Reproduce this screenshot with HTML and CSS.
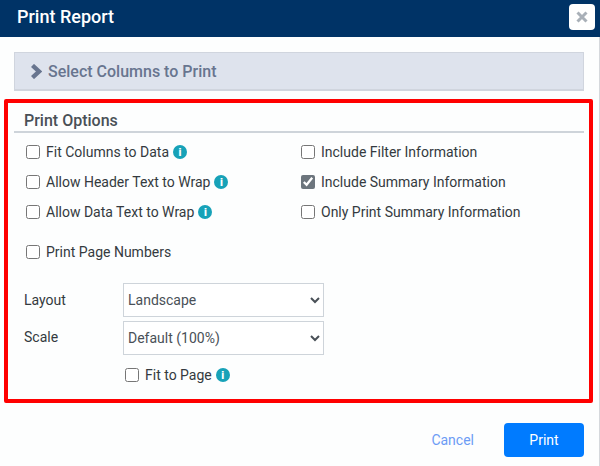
FILE: index.html
```html
<!DOCTYPE html>
<html lang="en">
<head>
    <meta charset="UTF-8">
    <title>Print Report</title>
    <link rel="stylesheet" href="styles.css">
</head>
<body>
    <div class="modal">
        <div class="modal-header">
            <h1>Print Report</h1>
            <button class="close-btn" aria-label="Close">
                <svg width="12" height="12" viewBox="0 0 12 12"><path d="M1.5 1.5l9 9M10.5 1.5l-9 9" stroke="#a9b0b8" stroke-width="3" fill="none"/></svg>
            </button>
        </div>

        <div class="modal-body">
            <div class="accordion">
                <svg class="chevron" width="12" height="15" viewBox="0 0 12 15"><path d="M2.5 1.5l6.5 6-6.5 6" stroke="#68758f" stroke-width="4.4" fill="none"/></svg>
                <span>Select Columns to Print</span>
            </div>

            <h2 class="section-title">Print Options</h2>

            <div class="options">
                <div class="option-col">
                    <label class="check"><input type="checkbox"> Fit Columns to Data <i class="info">i</i></label>
                    <label class="check"><input type="checkbox"> Allow Header Text to Wrap <i class="info">i</i></label>
                    <label class="check"><input type="checkbox"> Allow Data Text to Wrap <i class="info">i</i></label>
                </div>
                <div class="option-col">
                    <label class="check"><input type="checkbox"> Include Filter Information</label>
                    <label class="check"><input type="checkbox" checked> Include Summary Information</label>
                    <label class="check"><input type="checkbox"> Only Print Summary Information</label>
                </div>
            </div>

            <label class="check page-numbers"><input type="checkbox"> Print Page Numbers</label>

            <div class="form-row">
                <label for="layout">Layout</label>
                <select id="layout"><option>Landscape</option><option>Portrait</option></select>
            </div>
            <div class="form-row form-row-scale">
                <label for="scale">Scale</label>
                <select id="scale"><option>Default (100%)</option></select>
            </div>
            <label class="check fit-page"><input type="checkbox"> Fit to Page <i class="info">i</i></label>
        </div>

        <div class="modal-footer">
            <a class="cancel" href="#">Cancel</a>
            <button class="print-btn">Print</button>
        </div>

        <div class="highlight"></div>
    </div>
</body>
</html>
```

FILE: styles.css
```css
* {
    box-sizing: border-box;
}
html, body {
    margin: 0;
    height: 100%;
}
body {
    font-family: Roboto, sans-serif;
    font-size: 14px;
    color: #343a40;
    background: #fdfefe;
    overflow: hidden;
}
.modal {
    position: relative;
    height: 466px;
    border-right: 1px solid #d5d8dc;
}
.modal-header {
    display: flex;
    align-items: center;
    justify-content: space-between;
    height: 37px;
    margin-right: -1px;
    padding: 0 5px 3px 17px;
    background: #003366;
}
.modal-header h1 {
    margin: 0 0 2px;
    font-size: 18px;
    font-weight: 500;
    color: #fff;
}
.close-btn {
    display: flex;
    align-items: center;
    justify-content: center;
    width: 26px;
    height: 26px;
    padding: 0;
    border: none;
    border-radius: 4px;
    background: #fff;
}
.modal-body {
    padding: 15px 15px 0 14px;
}
.accordion {
    display: flex;
    align-items: center;
    gap: 6px;
    height: 39px;
    padding: 0 0 0 15px;
    border: 1px solid #d0d5de;
    border-bottom-width: 2px;
    background: #dee3ed;
    font-size: 16px;
    font-weight: 500;
    color: #68758f;
}
.section-title {
    margin: 20px 0 0;
    padding: 0 0 0 10px;
    border-bottom: 2px solid #ced4da;
    font-size: 16px;
    font-weight: 500;
    line-height: 20px;
    color: #495057;
}
.options {
    display: flex;
    margin-top: 4px;
}
.option-col {
    display: flex;
    flex-direction: column;
    width: 275px;
}
.check {
    display: flex;
    align-items: center;
    height: 30px;
    padding-left: 12px;
    color: #343a40;
}
.check input {
    width: 14px;
    height: 14px;
    margin: 0 6px 0 0;
    accent-color: #6c757d;
}
.info {
    display: flex;
    align-items: center;
    justify-content: center;
    width: 14px;
    height: 14px;
    margin-left: 4px;
    border-radius: 50%;
    background: #17a2b8;
    font-family: "DejaVu Sans", sans-serif;
    font-size: 10px;
    font-style: normal;
    font-weight: 700;
    color: #fff;
}
.page-numbers {
    margin-top: 10px;
}
.form-row {
    display: flex;
    align-items: center;
    margin-top: 4px;
    padding-left: 10px;
}
.page-numbers + .form-row {
    margin-top: 16px;
}
.form-row label {
    width: 99px;
}
.form-row-scale label {
    margin-bottom: 2px;
}
select {
    width: 201px;
    height: 34px;
    padding: 0;
    border: 1px solid #ced4da;
    border-radius: 0;
    background: #fff;
    font-family: Roboto, sans-serif;
    font-size: 14px;
    color: #495057;
}
.fit-page {
    margin-top: 5px;
    padding-left: 111px;
}
.modal-footer {
    position: absolute;
    top: 423px;
    right: 15px;
    display: flex;
    align-items: center;
    gap: 30px;
}
.cancel {
    color: #6c9cf5;
    text-decoration: none;
}
.print-btn {
    width: 80px;
    height: 34px;
    border: none;
    border-radius: 4px;
    background: #007bff;
    font-family: Roboto, sans-serif;
    font-size: 14px;
    color: #fff;
}
.highlight {
    position: absolute;
    left: 4px;
    top: 99px;
    width: 589px;
    height: 304px;
    border: 4px solid #ff0000;
    border-radius: 2px;
}
```
